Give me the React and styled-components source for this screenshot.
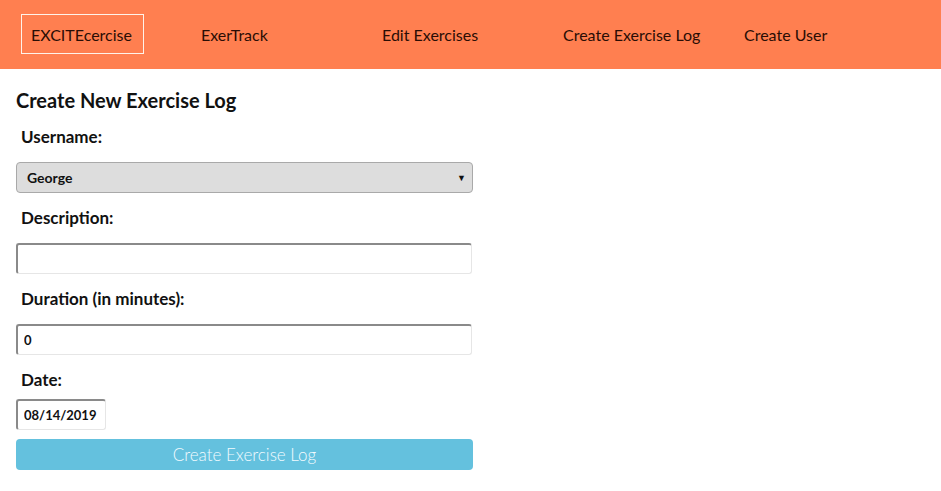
import styled, { createGlobalStyle } from "styled-components";

const GlobalStyle = createGlobalStyle`
  body {
    margin: 0;
    background: #ffffff;
    font-family: "Lato", "Open Sans", sans-serif;
    color: #111;
  }
`;

const Nav = styled.nav`
  display: flex;
  align-items: center;
  height: 69px;
  padding-left: 21px;
  padding-bottom: 1px;
  box-sizing: border-box;
  background-color: #ff7f50;
`;

const Brand = styled.a`
  display: flex;
  align-items: center;
  box-sizing: border-box;
  width: 123px;
  height: 40px;
  padding-left: 9px;
  border: 1px solid #fff3ea;
  color: #2a0d05;
  font-size: 16px;
  text-decoration: none;
`;

const NavLinks = styled.ul`
  display: flex;
  margin: 0 0 0 57px;
  padding: 0;
  list-style: none;
`;

const NavItem = styled.li`
  width: 181px;
  color: #2a0d05;
  font-size: 16px;
`;

const Container = styled.div`
  padding: 19px 16px 0;
  width: 457px;
`;

const Title = styled.h3`
  margin: 0 0 15px;
  font-size: 20px;
  line-height: 24px;
  font-weight: 700;
`;

const Group = styled.div`
  display: flex;
  flex-direction: column;
  margin-bottom: ${(p) => (p.$tight ? "9px" : "15px")};
`;

const Label = styled.label`
  padding-left: 5px;
  margin-bottom: ${(p) => (p.$tight ? "9px" : "15px")};
  font-size: 17px;
  line-height: 20px;
  font-weight: 700;
`;

const Select = styled.div`
  display: flex;
  align-items: center;
  justify-content: space-between;
  box-sizing: border-box;
  height: 31px;
  padding: 0 6px 0 10px;
  background: #dddddd;
  border: 1px solid #a9a9a9;
  border-radius: 4px;
  font-size: 14px;
  font-weight: 700;
`;

const Arrow = styled.span`
  font-size: 9px;
`;

const Input = styled.input`
  box-sizing: border-box;
  width: ${(p) => p.$width || "456px"};
  height: 31px;
  padding: 0 6px;
  border-style: solid;
  border-width: 2px 1px 1px 2px;
  border-color: #8a8a8a #e6e6e6 #e6e6e6 #8a8a8a;
  border-radius: 3px;
  font-family: "Lato", sans-serif;
  font-size: 13px;
  font-weight: 700;
  color: #111;
  background: #fff;
`;

const Submit = styled.button`
  box-sizing: border-box;
  width: 457px;
  height: 31px;
  border: none;
  border-radius: 4px;
  background: #64c1de;
  color: #f2fbff;
  font-family: "Lato", sans-serif;
  font-size: 17px;
  font-weight: 300;
`;

const App = () => {
  return (
    <>
      <GlobalStyle />
      <Nav>
        <Brand href="#">EXCITEcercise</Brand>
        <NavLinks>
          <NavItem>ExerTrack</NavItem>
          <NavItem>Edit Exercises</NavItem>
          <NavItem>Create Exercise Log</NavItem>
          <NavItem>Create User</NavItem>
        </NavLinks>
      </Nav>
      <Container>
        <Title>Create New Exercise Log</Title>
        <Group>
          <Label>Username:</Label>
          <Select>
            George
            <Arrow>▼</Arrow>
          </Select>
        </Group>
        <Group>
          <Label>Description:</Label>
          <Input type="text" defaultValue="" />
        </Group>
        <Group>
          <Label>Duration (in minutes):</Label>
          <Input type="text" defaultValue="0" />
        </Group>
        <Group $tight>
          <Label $tight>Date:</Label>
          <Input type="text" defaultValue="08/14/2019" $width="90px" />
        </Group>
        <Submit>Create Exercise Log</Submit>
      </Container>
    </>
  );
};

export default App;
